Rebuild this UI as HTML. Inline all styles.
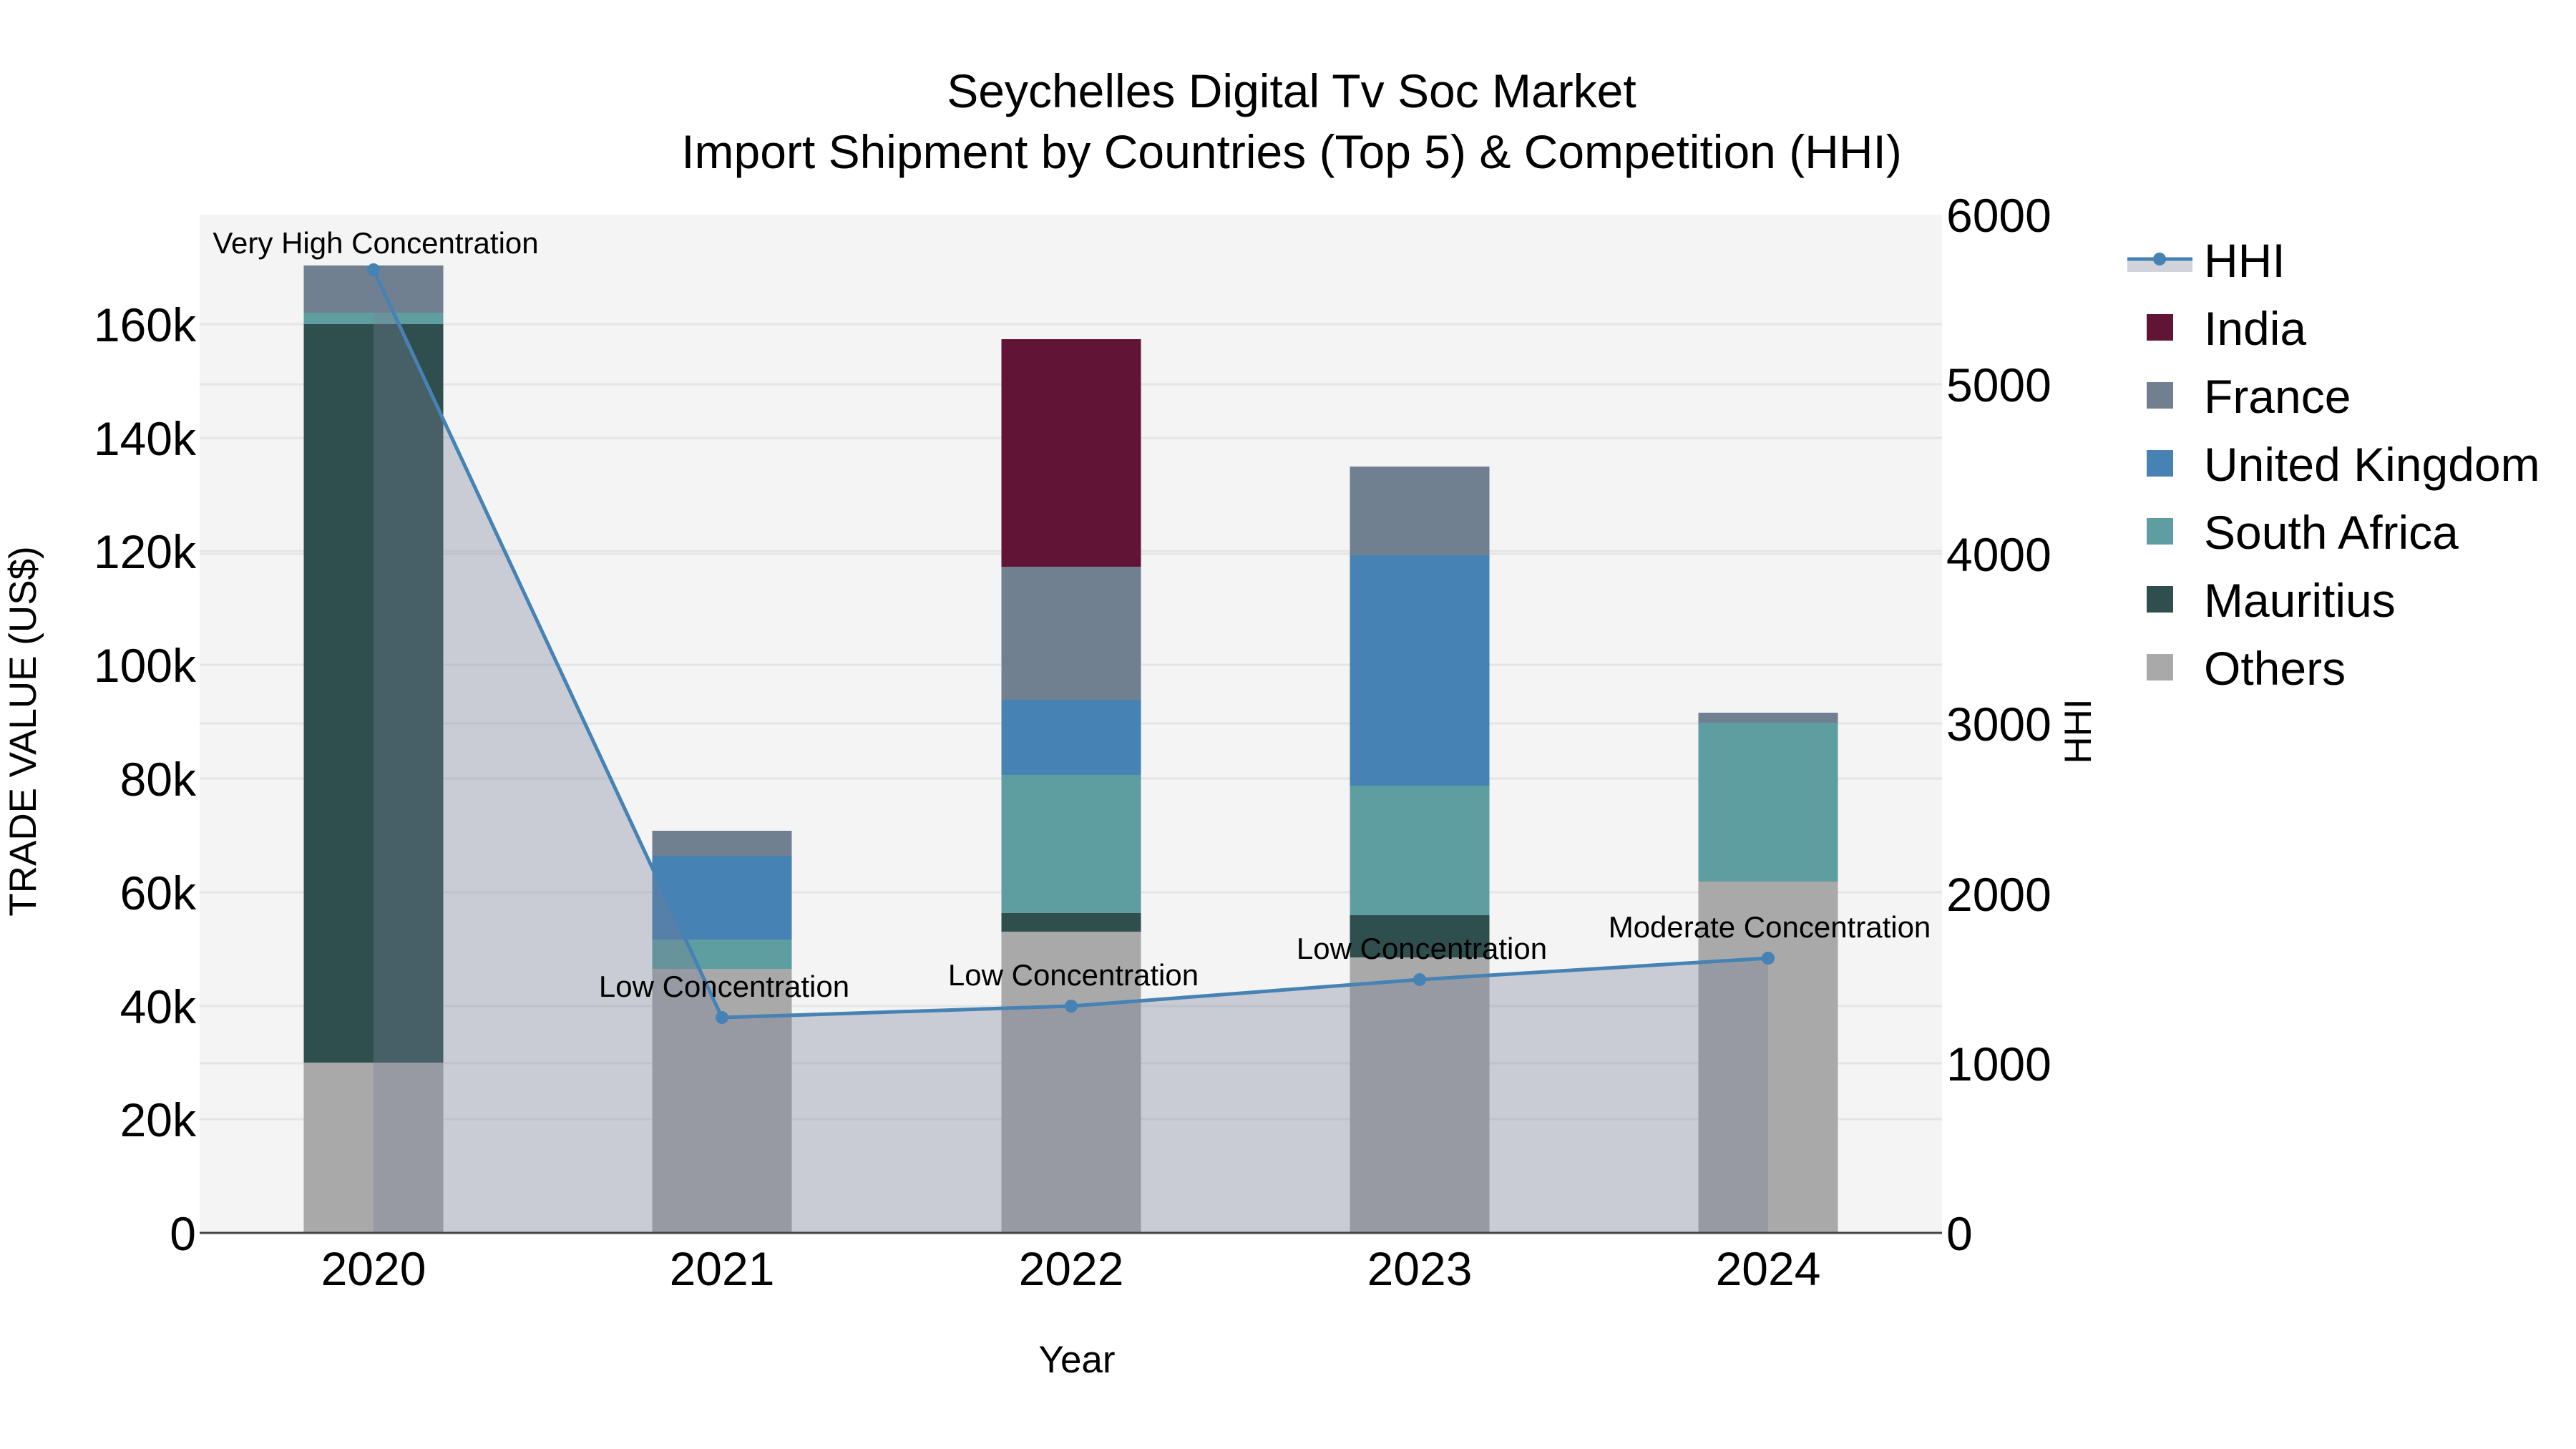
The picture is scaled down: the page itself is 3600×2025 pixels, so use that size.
<!DOCTYPE html>
<html><head><meta charset="utf-8"><style>
html,body{margin:0;padding:0;background:#fff;}
svg{display:block;}
text{font-family:"Liberation Sans",sans-serif;fill:#000;}
</style></head><body>
<svg width="3600" height="2025" viewBox="0 0 3600 2025" xmlns="http://www.w3.org/2000/svg">
<rect x="0" y="0" width="3600" height="2025" fill="#fff"/>
<rect x="279" y="300" width="2435" height="1423" fill="#f4f4f4"/>
<g stroke="#e5e5e5" stroke-width="3">
<line x1="279" x2="2714" y1="1564" y2="1564"/><line x1="279" x2="2714" y1="1406" y2="1406"/>
<line x1="279" x2="2714" y1="1247" y2="1247"/><line x1="279" x2="2714" y1="1088" y2="1088"/>
<line x1="279" x2="2714" y1="929" y2="929"/><line x1="279" x2="2714" y1="770" y2="770"/>
<line x1="279" x2="2714" y1="612" y2="612"/><line x1="279" x2="2714" y1="453" y2="453"/>
<line x1="279" x2="2714" y1="1486" y2="1486"/><line x1="279" x2="2714" y1="1011" y2="1011"/>
<line x1="279" x2="2714" y1="774" y2="774"/><line x1="279" x2="2714" y1="537" y2="537"/>
</g>
<rect x="424.5" y="1485" width="195" height="238" fill="#a9a9a9"/>
<rect x="424.5" y="453" width="195" height="1032" fill="#2f4f4f"/>
<rect x="424.5" y="437" width="195" height="16" fill="#5f9ea0"/>
<rect x="424.5" y="371" width="195" height="66" fill="#708090"/>
<rect x="911.5" y="1354" width="195" height="369" fill="#a9a9a9"/>
<rect x="911.5" y="1313" width="195" height="41" fill="#5f9ea0"/>
<rect x="911.5" y="1196" width="195" height="117" fill="#4682b4"/>
<rect x="911.5" y="1161" width="195" height="35" fill="#708090"/>
<rect x="1399.5" y="1302" width="195" height="421" fill="#a9a9a9"/>
<rect x="1399.5" y="1276" width="195" height="26" fill="#2f4f4f"/>
<rect x="1399.5" y="1083" width="195" height="193" fill="#5f9ea0"/>
<rect x="1399.5" y="978" width="195" height="105" fill="#4682b4"/>
<rect x="1399.5" y="792" width="195" height="186" fill="#708090"/>
<rect x="1399.5" y="474" width="195" height="318" fill="#621436"/>
<rect x="1886.5" y="1338" width="195" height="385" fill="#a9a9a9"/>
<rect x="1886.5" y="1279" width="195" height="59" fill="#2f4f4f"/>
<rect x="1886.5" y="1098" width="195" height="181" fill="#5f9ea0"/>
<rect x="1886.5" y="776" width="195" height="322" fill="#4682b4"/>
<rect x="1886.5" y="652" width="195" height="124" fill="#708090"/>
<rect x="2373.5" y="1232" width="195" height="491" fill="#a9a9a9"/>
<rect x="2373.5" y="1010" width="195" height="222" fill="#5f9ea0"/>
<rect x="2373.5" y="996" width="195" height="14" fill="#708090"/>
<polygon points="522,1723 522,377 1009,1422 1497,1406 1984,1369 2471,1339 2471,1723" fill="rgba(116,127,150,0.34)"/>
<line x1="279" x2="2714" y1="1723" y2="1723" stroke="#444" stroke-width="3"/>
<polyline points="522,377 1009,1422 1497,1406 1984,1369 2471,1339" fill="none" stroke="#4682b4" stroke-width="5"/>
<g fill="#4682b4"><circle cx="522" cy="377" r="9"/><circle cx="1009" cy="1422" r="9"/><circle cx="1497" cy="1406" r="9"/><circle cx="1984" cy="1369" r="9"/><circle cx="2471" cy="1339" r="9"/></g>
<g font-size="42" text-anchor="middle">
<text x="525" y="354">Very High Concentration</text>
<text x="1012" y="1393">Low Concentration</text>
<text x="1500" y="1377">Low Concentration</text>
<text x="1987" y="1340">Low Concentration</text>
<text x="2473" y="1310">Moderate Concentration</text>
</g>
<g font-size="66" text-anchor="end">
<text x="274" y="1747">0</text><text x="274" y="1588">20k</text><text x="274" y="1430">40k</text>
<text x="274" y="1271">60k</text><text x="274" y="1112">80k</text><text x="274" y="953">100k</text>
<text x="274" y="794">120k</text><text x="274" y="636">140k</text><text x="274" y="477">160k</text>
</g>
<g font-size="66">
<text x="2720" y="1747">0</text><text x="2720" y="1510">1000</text><text x="2720" y="1273">2000</text>
<text x="2720" y="1035">3000</text><text x="2720" y="798">4000</text><text x="2720" y="561">5000</text>
<text x="2720" y="324">6000</text>
</g>
<g font-size="66" text-anchor="middle">
<text x="522" y="1796">2020</text><text x="1009" y="1796">2021</text><text x="1497" y="1796">2022</text>
<text x="1984" y="1796">2023</text><text x="2471" y="1796">2024</text>
</g>
<text x="1505" y="1918" font-size="53" text-anchor="middle">Year</text>
<text transform="translate(50,1022) rotate(-90)" font-size="53" text-anchor="middle">TRADE VALUE (US$)</text>
<text transform="translate(2922,1022) rotate(-90)" font-size="53" text-anchor="middle">HHI</text>
<text x="1805" y="150" font-size="66" text-anchor="middle">Seychelles Digital Tv Soc Market</text>
<text x="1805" y="235" font-size="66" text-anchor="middle">Import Shipment by Countries (Top 5) &amp; Competition (HHI)</text>
<rect x="2973" y="362" width="91" height="18" fill="#d0d4da"/>
<line x1="2973" x2="3064" y1="362" y2="362" stroke="#4682b4" stroke-width="5"/>
<circle cx="3018" cy="362" r="9" fill="#4682b4"/>
<g font-size="66">
<text x="3080" y="387">HHI</text>
<text x="3080" y="482">India</text>
<text x="3080" y="577">France</text>
<text x="3080" y="672">United Kingdom</text>
<text x="3080" y="767">South Africa</text>
<text x="3080" y="862">Mauritius</text>
<text x="3080" y="957">Others</text>
</g>
<rect x="3000" y="439" width="37" height="37" fill="#621436"/>
<rect x="3000" y="534" width="37" height="37" fill="#708090"/>
<rect x="3000" y="629" width="37" height="37" fill="#4682b4"/>
<rect x="3000" y="724" width="37" height="37" fill="#5f9ea0"/>
<rect x="3000" y="819" width="37" height="37" fill="#2f4f4f"/>
<rect x="3000" y="914" width="37" height="37" fill="#a9a9a9"/>
</svg>
</body></html>
